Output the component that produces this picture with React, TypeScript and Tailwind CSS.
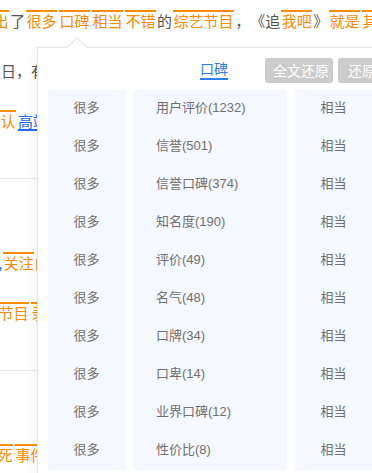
import type { ReactNode } from "react";

type Kind = "o" | "b" | "bu" | undefined;
type Word = { t: string; k?: Kind };

// orange = highlighted phrase with a bar on top, bu = blue underlined link
function Piece({ t, k }: Word): ReactNode {
  if (k === "o") {
    return (
      <span className="mx-px inline-block border-y-2 border-t-[#ff8c00] border-b-transparent px-[0.5px] leading-[17px] text-[#ff8a00]">
        {t}
      </span>
    );
  }
  if (k === "bu") {
    return (
      <span className="mx-px inline-block border-y-2 border-t-transparent border-b-[#2468f2] leading-[17px] text-[#2468f2]">
        {t}
      </span>
    );
  }
  if (k === "b") {
    return (
      <span className="inline-block border-y-2 border-transparent leading-[17px] text-[#2468f2]">
        {t}
      </span>
    );
  }
  return (
    <span className="inline-block border-y-2 border-transparent leading-[17px] text-[#555]">
      {t}
    </span>
  );
}

function Line({ words, className = "" }: { words: Word[]; className?: string }): ReactNode {
  return (
    <div className={`flex h-[50px] items-center whitespace-nowrap text-[15px] ${className}`}>
      {words.map((w, i) => (
        <Piece key={i} t={w.t} k={w.k} />
      ))}
    </div>
  );
}

const keywords = [
  "用户评价(1232)",
  "信誉(501)",
  "信誉口碑(374)",
  "知名度(190)",
  "评价(49)",
  "名气(48)",
  "口牌(34)",
  "口卑(14)",
  "业界口碑(12)",
  "性价比(8)",
];

function Popover(): ReactNode {
  return (
    <div className="absolute left-[37px] top-[47px] h-[440px] w-[360px] border border-[#e6e6e6] bg-white shadow-[0_2px_10px_rgba(0,0,0,0.08)]">
      <div className="absolute left-[32px] top-[-8px] h-[14px] w-[14px] rotate-45 border-l border-t border-[#e6e6e6] bg-white" />

      <div className="flex h-[42px] items-start pt-[10px]">
        <div className="ml-[162px] border-b-2 border-[#2b7ef5] text-[14px] leading-[20px] text-[#2b7ef5]">
          口碑
        </div>
        <button className="ml-[37px] h-[25px] w-[68px] rounded-[3px] bg-[#cccccc] pl-[8px] pr-[4px] text-[14px] text-white">
          全文还原
        </button>
        <button className="ml-[5px] h-[25px] w-[48px] rounded-[3px] bg-[#cccccc] text-[14px] text-white">
          还原
        </button>
      </div>

      <div className="flex gap-[8px] px-[10px] font-['Liberation_Sans','Noto_Sans_CJK_SC',sans-serif] text-[13px] text-[#707070]">
        <div className="w-[77px] bg-[#f5f8fe]">
          {keywords.map((k) => (
            <div key={k} className="h-[38px] text-center leading-[36px]">
              很多
            </div>
          ))}
        </div>
        <div className="w-[154px] bg-[#f5f8fe] pl-[23px]">
          {keywords.map((k) => (
            <div key={k} className="h-[38px] leading-[36px]">
              {k}
            </div>
          ))}
        </div>
        <div className="w-[77px] bg-[#f5f8fe]">
          {keywords.map((k) => (
            <div key={k} className="h-[38px] text-center leading-[36px]">
              相当
            </div>
          ))}
        </div>
      </div>
    </div>
  );
}

export default function App(): ReactNode {
  return (
    <div className="relative h-[473px] w-[372px] overflow-hidden bg-white font-['Noto_Sans_CJK_SC',sans-serif] [text-spacing-trim:space-all]">
      <div className="-mt-[5px]">
        <div className="border-b border-[#e8e8e8] pb-[33px]">
          <Line
            className="-ml-[23px]"
            words={[
              { t: "推出", k: "o" },
              { t: "了" },
              { t: "很多", k: "o" },
              { t: "口碑", k: "o" },
              { t: "相当", k: "o" },
              { t: "不错", k: "o" },
              { t: "的" },
              { t: "综艺节目", k: "o" },
              { t: "，" },
              { t: "《追" },
              { t: "我吧", k: "o" },
              { t: "》" },
              { t: "就是", k: "o" },
              { t: "其中", k: "o" },
            ]}
          />
          <Line className="ml-px" words={[{ t: "日，有不少观众表示节目内容十分精彩" }]} />
          <Line
            className="-ml-[16px]"
            words={[
              { t: "公认", k: "o" },
              { t: "高端", k: "bu" },
              { t: "的节目" },
            ]}
          />
        </div>

        <div className="border-b border-[#e8e8e8] pb-[33px] pt-[8px]">
          <Line words={[{ t: "" }]} />
          <Line
            className="-ml-[2px]"
            words={[
              { t: ",", k: "b" },
              { t: "关注", k: "o" },
              { t: "的话题" },
            ]}
          />
          <Line
            className="-ml-[3px]"
            words={[
              { t: "节目", k: "o" },
              { t: "录制", k: "o" },
            ]}
          />
        </div>

        <div className="pt-[8px]">
          <Line words={[{ t: "" }]} />
          <Line
            className="-ml-[19px]"
            words={[
              { t: "猝死", k: "o" },
              { t: "事件", k: "o" },
            ]}
          />
        </div>
      </div>

      <Popover />
    </div>
  );
}
